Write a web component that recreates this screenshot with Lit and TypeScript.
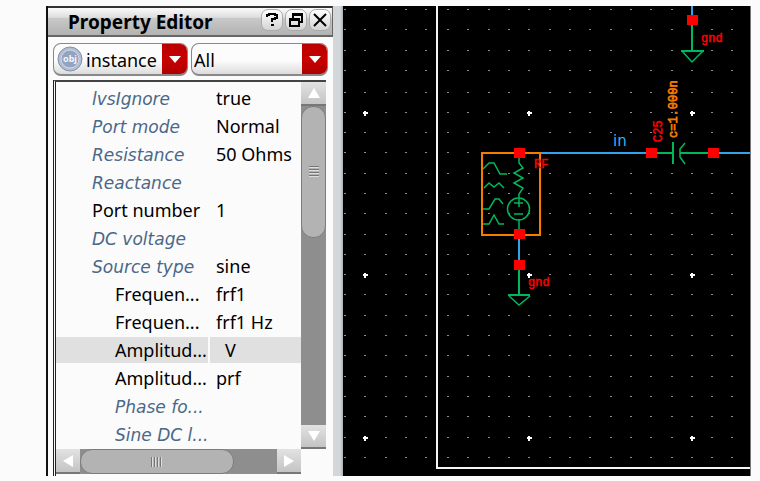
import { LitElement, html, css, svg } from "lit";
import { customElement } from "lit/decorators.js";
import { classMap } from "lit/directives/class-map.js";

type Row = { name: string; value?: string; unset?: boolean; child?: boolean; selected?: boolean };

const ROWS: Row[] = [
  { name: "lvsIgnore", value: "true", unset: true },
  { name: "Port mode", value: "Normal", unset: true },
  { name: "Resistance", value: "50 Ohms", unset: true },
  { name: "Reactance", unset: true },
  { name: "Port number", value: "1" },
  { name: "DC voltage", unset: true },
  { name: "Source type", value: "sine", unset: true },
  { name: "Frequen...", value: "frf1", child: true },
  { name: "Frequen...", value: "frf1 Hz", child: true },
  { name: "Amplitud...", value: "V", child: true, selected: true },
  { name: "Amplitud...", value: "prf", child: true },
  { name: "Phase fo...", unset: true, child: true },
  { name: "Sine DC l...", unset: true, child: true },
];

@customElement("property-editor")
class PropertyEditor extends LitElement {
  static styles = css`
    :host {
      display: flex;
      flex-direction: column;
      box-sizing: border-box;
      border-left: 2px solid #111;
      background: #fbfbfb;
      color: #000;
      font-family: "Noto Sans", "Open Sans", sans-serif;
      font-size: 18px;
    }
    button {
      display: grid;
      place-items: center;
      box-sizing: border-box;
      padding: 0;
      border: 0;
      font: inherit;
    }
    svg { display: block; }
    header {
      display: flex;
      align-items: center;
      box-sizing: border-box;
      height: 31px;
      padding: 0 1px 0 20px;
      border-top: 2px solid #333;
      border-right: 1px solid #666;
      border-bottom: 2px solid #666;
      background: linear-gradient(#fafafa, #dedede 35%, #c9c9c9 36%, #b2b2b2);
    }
    h1 {
      flex: 1;
      margin: 0;
      font-size: 19px;
      line-height: 24px;
      white-space: nowrap;
    }
    .tools { display: flex; gap: 2px; margin-top: -4px; }
    .tools button {
      width: 22px;
      height: 22px;
      border: 1px solid #aaa;
      border-radius: 7px;
      background: linear-gradient(#fff, #d4d4d4);
    }
    .filters {
      display: grid;
      grid-template-columns: 135px 1fr;
      gap: 3px;
      padding: 6px 5px 4px 5px;
    }
    .combo {
      display: flex;
      align-items: center;
      position: relative;
      box-sizing: border-box;
      height: 33px;
      border: 1px solid #888;
      border-bottom: 2px solid #888;
      border-radius: 8px;
      overflow: hidden;
      background: linear-gradient(#fcfcfc 55%, #dcdcdc);
    }
    .combo .badge { flex: none; margin-left: 3px; }
    .combo select {
      flex: 1;
      min-width: 0;
      height: 30px;
      padding: 2px 0 0 2px;
      border: 0;
      appearance: none;
      background: transparent;
      color: #000;
      font: inherit;
    }
    .combo.icon select { padding-left: 3px; }
    .combo .drop {
      flex: none;
      display: grid;
      place-items: center;
      width: 25px;
      height: 30px;
      background: linear-gradient(#b80000, #c80000 50%, #b00000);
      pointer-events: none;
    }
    .frame {
      flex: 1;
      display: grid;
      grid-template-columns: 1fr 25px;
      grid-template-rows: auto 25px 1fr;
      margin: 0 7px 0 5px;
      border-top: 2px solid #444;
      border-left: 3px double #222;
    }
    table {
      width: 100%;
      margin-top: 2px;
      border-collapse: collapse;
      table-layout: fixed;
    }
    .key { width: 153px; }
    td, th {
      height: 28px;
      padding: 0 0 0 7px;
      box-sizing: border-box;
      font-weight: 400;
      text-align: left;
      line-height: 26px;
      white-space: nowrap;
      border-bottom: 2px solid #fbfbfb;
    }
    th { padding-left: 36px; }
    .child th { padding-left: 59px; }
    .unset th {
      padding-top: 2px;
      color: #4a6888;
      font-family: "DejaVu Sans", sans-serif;
      font-size: 17px;
      font-style: italic;
      line-height: 24px;
    }
    .selected th, .selected td { background: #e0e0e0; }
    .selected td { border-left: 2px solid #fbfbfb; padding-left: 15px; }
    .bar { display: flex; background: #8e8e8e; }
    .vertical { flex-direction: column; }
    .arrow {
      flex: none;
      width: 24px;
      height: 25px;
      background: linear-gradient(#e2e2e2, #c4c4c4);
      border-bottom: 2px solid #777;
    }
    .vertical .arrow { width: 25px; height: 24px; }
    .thumb {
      display: grid;
      place-items: center;
      box-sizing: border-box;
      border: 1px solid #7c7c7c;
      border-radius: 12px;
      background: #b3b3b3;
    }
    .vertical .thumb { flex: 0 0 36%; }
    .horizontal .thumb { flex: 0 0 63%; }
    .spacer { flex: 1; }
  `;

  private arrow(label: string, points: string) {
    return html`<button class="arrow" aria-label=${label}>
      <svg width="14" height="14" viewBox="0 0 14 14"><polygon points=${points} fill="#fff" /></svg>
    </button>`;
  }

  private drop() {
    return html`<span class="drop"><svg width="12" height="7" viewBox="0 0 12 7">
      <path d="M0 0H12L6 7Z" fill="#fff" /></svg></span>`;
  }

  render() {
    return html`
      <header>
        <h1>Property Editor</h1>
        <div class="tools">
          <button aria-label="Help">
            <svg width="14" height="16" viewBox="0 0 14 16" fill="none" stroke="#000" stroke-width="2">
              <path d="M2 5V3H4V2H10V3H12V6H10V7H7V10M6 13H9" />
            </svg>
          </button>
          <button aria-label="Float">
            <svg width="14" height="16" viewBox="0 0 14 16" fill="none" stroke="#000" stroke-width="2">
              <path d="M4 6V2H13V10H10M4 3H13M1 7H10V14H1ZM1 8H10" />
            </svg>
          </button>
          <button aria-label="Close">
            <svg width="14" height="14" viewBox="0 0 14 14" fill="none" stroke="#000" stroke-width="2">
              <path d="M1 1L13 13M13 1L1 13" />
            </svg>
          </button>
        </div>
      </header>
      <div class="filters">
        <div class="combo icon">
          <svg class="badge" width="26" height="26" viewBox="0 0 26 26">
            <circle cx="13" cy="13" r="12" fill="#b3bdd1" stroke="#8090b0" stroke-width="1" />
            <circle cx="13" cy="13" r="9" fill="#94a3c0" stroke="#d5dae5" stroke-width="1" />
            <text x="13" y="16" text-anchor="middle" font-size="9" font-weight="700" fill="#f4f6fa">obj</text>
          </svg>
          <select aria-label="Object kind"><option>instance</option></select>
          ${this.drop()}
        </div>
        <div class="combo">
          <select aria-label="Filter"><option>All</option></select>
          ${this.drop()}
        </div>
      </div>
      <div class="frame">
        <table>
          <colgroup><col class="key" /><col /></colgroup>
          <tbody>
            ${ROWS.map((r) => html`<tr class=${classMap({ unset: !!r.unset, child: !!r.child, selected: !!r.selected })}>
              <th scope="row">${r.name}</th><td>${r.value ?? ""}</td>
            </tr>`)}
          </tbody>
        </table>
        <div class="bar vertical">
          ${this.arrow("Scroll up", "7,2 13,12 1,12")}
          <div class="thumb"><svg width="10" height="12" viewBox="0 0 10 12">
            <path d="M0 0.5H10M0 3.5H10M0 6.5H10M0 9.5H10" stroke="#777" />
            <path d="M0 1.5H10M0 4.5H10M0 7.5H10M0 10.5H10" stroke="#ddd" /></svg></div>
          <div class="spacer"></div>
          ${this.arrow("Scroll down", "1,2 13,2 7,12")}
        </div>
        <div class="bar horizontal">
          ${this.arrow("Scroll left", "2,7 12,1 12,13")}
          <div class="thumb"><svg width="14" height="10" viewBox="0 0 14 10">
            <path d="M1.5 0V10M4.5 0V10M7.5 0V10M10.5 0V10" stroke="#777" />
            <path d="M2.5 0V10M5.5 0V10M8.5 0V10M11.5 0V10" stroke="#ddd" /></svg></div>
          <div class="spacer"></div>
          ${this.arrow("Scroll right", "2,1 12,7 2,13")}
        </div>
      </div>
    `;
  }
}

const XS = [345, 365, 386, 406, 426, 448, 468, 489, 509, 529, 550, 570, 590, 611, 631, 651, 672, 692, 712, 732];
const YS = [10, 30, 51, 71, 93, 113, 133, 153, 174, 194, 214, 235, 255, 275, 295, 316, 336, 356, 377, 397, 417, 438, 458];
const MAJOR_X = [365, 529, 692];
const MAJOR_Y = [113, 275, 438];

@customElement("schematic-view")
class SchematicView extends LitElement {
  static styles = css`
    :host { display: block; background: #000; overflow: hidden; }
    svg { display: block; width: 100%; }
    .dot { fill: #8c8c94; }
    .major { stroke: #fff; stroke-width: 2; }
    .sheet { fill: none; stroke: #f4f4f4; stroke-width: 2; }
    .wire { fill: none; stroke: #2fa4ec; stroke-width: 2; }
    .part { fill: none; stroke: #00b85c; stroke-width: 2; }
    .thin { stroke-width: 1.5; }
    .pin { fill: #f00; }
    .box { fill: none; stroke: #f57c00; stroke-width: 2; }
    text { font-family: "Liberation Mono", "Courier New", monospace; font-size: 12px; }
    .red { fill: #f00; stroke: #f00; stroke-width: 0.5; }
    .orange { fill: #f57c00; stroke: #f57c00; stroke-width: 0.7; }
    .blue { fill: #2fb4f5; font-family: "DejaVu Sans", sans-serif; font-size: 15px; }
  `;

  private pin(x: number, y: number) {
    return svg`<rect class="pin" x=${x - 5} y=${y - 5} width="11" height="10" />`;
  }

  render() {
    return html`<svg viewBox="343 6 407 470" role="img" aria-label="Schematic">
      ${YS.map((y) => XS.map((x) => svg`<rect class="dot" x=${x - 1} y=${y - 1} width="2" height="1" />`))}
      ${MAJOR_Y.map((y) => MAJOR_X.map((x) => svg`<path class="major" d="M${x - 2} ${y}h5M${x} ${y - 2}v5" />`))}
      <path class="sheet" d="M437 6V468H751" />
      <path class="wire" d="M692 6V20M519 153H651M713 153H751M519 235V265" />
      <path class="part" d="M692 20V51M681 51H704M651 153H673M673 142V164M680 153H713M519 265V295M508 295H530" />
      <path class="part thin" d="M682 51L692 62L703 51M685 143L680 149V157L685 164M509 296L519 305L530 296" />
      <path class="part thin" d="M519 157V163L523 168L514 173L523 178L514 183L523 188L519 194V198M519 219V231M514 203H523M519 199V207M514 214H523" />
      <circle class="part thin" cx="518.5" cy="209" r="11" />
      <path class="part thin" d="M483 169L489 163H494L500 174H507M484 188L489 183L494 187L499 183L504 188M483 209H489L495 199H499L503 204M483 224H489L494 215L499 224H504" />
      <rect class="box" x="482" y="153" width="58" height="82" />
      ${this.pin(692, 20)}${this.pin(651, 153)}${this.pin(713, 153)}
      ${this.pin(519, 153)}${this.pin(519, 234)}${this.pin(519, 265)}
      <text class="red" x="701" y="42">gnd</text>
      <text class="red" x="528" y="286">gnd</text>
      <text class="red" x="534" y="168">RF</text>
      <text class="blue" x="613" y="146">in</text>
      <text class="red" transform="translate(662 142) rotate(-90)">C25</text>
      <text class="orange" transform="translate(677 138) rotate(-90)">c=1.000n</text>
    </svg>`;
  }
}

@customElement("app-root")
class AppRoot extends LitElement {
  static styles = css`
    :host {
      display: flex;
      box-sizing: border-box;
      min-height: 100vh;
      padding: 6px 9px 5px 46px;
      background: #fbfbfb;
    }
    property-editor { flex: 0 0 287px; }
    .splitter {
      flex: 0 0 10px;
      background: linear-gradient(90deg, #d4d7da 70%, #a9afb3);
    }
    schematic-view { flex: 1; border-right: 1px solid #777; }
  `;

  render() {
    return html`
      <property-editor></property-editor>
      <div class="splitter" role="separator"></div>
      <schematic-view></schematic-view>
    `;
  }
}
